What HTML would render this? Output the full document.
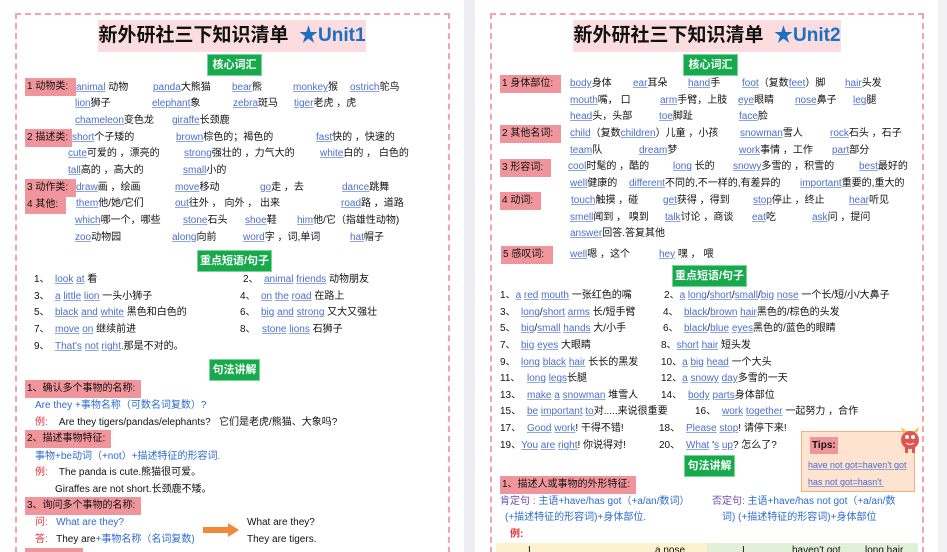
<!DOCTYPE html>
<html><head><meta charset="utf-8">
<style>
*{margin:0;padding:0;box-sizing:border-box}
html,body{width:947px;height:552px;overflow:hidden}
body{background:#fff;font-family:"Liberation Sans","Noto Sans CJK SC",sans-serif;font-size:10px;color:#111}
#w{position:relative;width:947px;height:552px;overflow:hidden}
.a{position:absolute;white-space:nowrap;line-height:12px}
u{color:#4b6fcb;text-decoration:underline;text-decoration-color:#8fa6e0}
.lb{position:absolute;background:#f0959c;line-height:18px;padding-left:2px;white-space:nowrap;color:#111}
.g{position:absolute;background:#16aa4c;color:#fff;font-weight:bold;font-size:11px;text-align:center;line-height:20px;border:1px solid #7bd49a}
.ttl{position:absolute;background:#fbdde0;font-weight:bold;font-size:19px;line-height:32px;text-align:center;white-space:nowrap}
.ttl b{color:#1e6fc0}
.bd{position:absolute;border:2px dashed #f2a3ab}
.bl{color:#2d6ccc}
.rd{color:#e0303a}
</style></head><body><div id="w">
<div style="position:absolute;left:464px;top:0;width:11px;height:552px;background:#ededf2"></div>
<div style="position:absolute;left:938px;top:0;width:9px;height:552px;background:#f2f2f5"></div>
<div class="bd" style="left:15px;top:13px;width:435px;height:560px"></div>
<div class="bd" style="left:490px;top:13px;width:434px;height:560px"></div>

<!-- LEFT PAGE -->
<div class="ttl" style="left:98px;top:20px;width:268px">新外研社三下知识清单 &nbsp;<b>★Unit1</b></div>
<div class="g" style="left:207px;top:54px;width:55px">核心词汇</div>
<div class="lb" style="left:25px;top:78px;width:51px">1 动物类:</div>
<div class="lb" style="left:25px;top:129px;width:47px">2 描述类:</div>
<div class="lb" style="left:25px;top:179px;width:51px">3 动作类:</div>
<div class="lb" style="left:25px;top:196px;width:41px">4 其他:</div>

<div class="a" style="left:76px;top:82px"><u>animal</u> 动物</div>
<div class="a" style="left:153px;top:82px"><u>panda</u>大熊猫</div>
<div class="a" style="left:232px;top:82px"><u>bear</u>熊</div>
<div class="a" style="left:293px;top:82px"><u>monkey</u>猴</div>
<div class="a" style="left:350px;top:82px"><u>ostrich</u>鸵鸟</div>
<div class="a" style="left:75px;top:98px"><u>lion</u>狮子</div>
<div class="a" style="left:152px;top:98px"><u>elephant</u>象</div>
<div class="a" style="left:233px;top:98px"><u>zebra</u>斑马</div>
<div class="a" style="left:294px;top:98px"><u>tiger</u>老虎 ，虎</div>
<div class="a" style="left:75px;top:115px"><u>chameleon</u>变色龙</div>
<div class="a" style="left:172px;top:115px"><u>giraffe</u>长颈鹿</div>
<div class="a" style="left:72px;top:132px"><u>short</u>个子矮的</div>
<div class="a" style="left:176px;top:132px"><u>brown</u>棕色的；褐色的</div>
<div class="a" style="left:316px;top:132px"><u>fast</u>快的 ，快速的</div>
<div class="a" style="left:68px;top:148px"><u>cute</u>可爱的 ，漂亮的</div>
<div class="a" style="left:184px;top:148px"><u>strong</u>强壮的 ，力气大的</div>
<div class="a" style="left:320px;top:148px"><u>white</u>白的 ， 白色的</div>
<div class="a" style="left:68px;top:165px"><u>tall</u>高的 ，高大的</div>
<div class="a" style="left:183px;top:165px"><u>small</u>小的</div>
<div class="a" style="left:76px;top:182px"><u>draw</u>画 ，绘画</div>
<div class="a" style="left:175px;top:182px"><u>move</u>移动</div>
<div class="a" style="left:260px;top:182px"><u>go</u>走 ，去</div>
<div class="a" style="left:342px;top:182px"><u>dance</u>跳舞</div>
<div class="a" style="left:76px;top:198px"><u>them</u>他/她/它们</div>
<div class="a" style="left:175px;top:198px"><u>out</u>往外 ， 向外 ， 出来</div>
<div class="a" style="left:341px;top:198px"><u>road</u>路 ，道路</div>
<div class="a" style="left:75px;top:215px"><u>which</u>哪一个，哪些</div>
<div class="a" style="left:183px;top:215px"><u>stone</u>石头</div>
<div class="a" style="left:245px;top:215px"><u>shoe</u>鞋</div>
<div class="a" style="left:297px;top:215px"><u>him</u>他/它（指雄性动物)</div>
<div class="a" style="left:75px;top:232px"><u>zoo</u>动物园</div>
<div class="a" style="left:172px;top:232px"><u>along</u>向前</div>
<div class="a" style="left:243px;top:232px"><u>word</u>字 ，词,单词</div>
<div class="a" style="left:350px;top:232px"><u>hat</u>帽子</div>

<div class="g" style="left:197px;top:250px;width:75px">重点短语/句子</div>
<div class="a" style="left:34px;top:274px">1、</div><div class="a" style="left:55px;top:274px"><u>look</u> <u>at</u> 看</div>
<div class="a" style="left:243px;top:274px">2、</div><div class="a" style="left:264px;top:274px"><u>animal</u> <u>friends</u> 动物朋友</div>
<div class="a" style="left:34px;top:291px">3、</div><div class="a" style="left:55px;top:291px"><u>a</u> <u>little</u> <u>lion</u> 一头小狮子</div>
<div class="a" style="left:240px;top:291px">4、</div><div class="a" style="left:261px;top:291px"><u>on</u> <u>the</u> <u>road</u> 在路上</div>
<div class="a" style="left:34px;top:307px">5、</div><div class="a" style="left:55px;top:307px"><u>black</u> <u>and</u> <u>white</u> 黑色和白色的</div>
<div class="a" style="left:240px;top:307px">6、</div><div class="a" style="left:261px;top:307px"><u>big</u> <u>and</u> <u>strong</u> 又大又强壮</div>
<div class="a" style="left:34px;top:324px">7、</div><div class="a" style="left:55px;top:324px"><u>move</u> <u>on</u> 继续前进</div>
<div class="a" style="left:240px;top:324px">8、</div><div class="a" style="left:262px;top:324px"><u>stone</u> <u>lions</u> 石狮子</div>
<div class="a" style="left:34px;top:341px">9、</div><div class="a" style="left:55px;top:341px"><u>That's</u> <u>not</u> <u>right</u>.那是不对的。</div>

<div class="g" style="left:209px;top:359px;width:51px">句法讲解</div>
<div class="lb" style="left:25px;top:380px;width:116px">1、确认多个事物的名称:</div>
<div class="a bl" style="left:35px;top:400px">Are they +事物名称（可数名词复数）?</div>
<div class="a" style="left:35px;top:417px"><span class="rd">例:</span>&nbsp;&nbsp;&nbsp; Are they tigers/pandas/elephants? &nbsp; 它们是老虎/熊猫、大象吗?</div>
<div class="lb" style="left:25px;top:430px;width:86px">2、描述事物特征:</div>
<div class="a bl" style="left:35px;top:451px">事物+be动词（+not）+描述特征的形容词.</div>
<div class="a" style="left:35px;top:467px"><span class="rd">例:</span>&nbsp;&nbsp;&nbsp; The panda is cute.熊猫很可爱。</div>
<div class="a" style="left:55px;top:484px">Giraffes are not short.长颈鹿不矮。</div>
<div class="lb" style="left:25px;top:497px;width:116px">3、询问多个事物的名称:</div>
<div class="a" style="left:35px;top:517px"><span class="rd">问:</span>&nbsp;&nbsp; <span class="bl">What are they?</span></div>
<div class="a" style="left:35px;top:534px"><span class="rd">答:</span>&nbsp;&nbsp; They are<span class="bl">+事物名称（名词复数)</span></div>
<svg style="position:absolute;left:203px;top:523px" width="36" height="14"><rect x="0" y="4" width="26" height="6" fill="#ee8a3a"/><polygon points="25,0 36,7 25,14" fill="#ee8a3a"/></svg>
<div class="a" style="left:247px;top:517px">What are they?</div>
<div class="a" style="left:247px;top:534px">They are tigers.</div>
<div style="position:absolute;left:25px;top:548px;width:58px;height:6px;background:#f0959c"></div>

<!-- RIGHT PAGE -->
<div class="ttl" style="left:573px;top:20px;width:268px">新外研社三下知识清单 &nbsp;<b>★Unit2</b></div>
<div class="g" style="left:683px;top:54px;width:55px">核心词汇</div>
<div class="lb" style="left:500px;top:75px;width:61px">1 身体部位:</div>
<div class="lb" style="left:500px;top:125px;width:61px">2 其他名词:</div>
<div class="lb" style="left:500px;top:159px;width:51px">3 形容词:</div>
<div class="lb" style="left:500px;top:192px;width:41px">4 动词:</div>
<div class="lb" style="left:501px;top:246px;width:52px">5 感叹词:</div>

<div class="a" style="left:570px;top:78px"><u>body</u>身体</div>
<div class="a" style="left:633px;top:78px"><u>ear</u>耳朵</div>
<div class="a" style="left:688px;top:78px"><u>hand</u>手</div>
<div class="a" style="left:742px;top:78px"><u>foot</u>（复数<u>feet</u>）脚</div>
<div class="a" style="left:845px;top:78px"><u>hair</u>头发</div>
<div class="a" style="left:570px;top:95px"><u>mouth</u>嘴， 口</div>
<div class="a" style="left:660px;top:95px"><u>arm</u>手臂，上肢</div>
<div class="a" style="left:738px;top:95px"><u>eye</u>眼睛</div>
<div class="a" style="left:795px;top:95px"><u>nose</u>鼻子</div>
<div class="a" style="left:853px;top:95px"><u>leg</u>腿</div>
<div class="a" style="left:570px;top:111px"><u>head</u>头，头部</div>
<div class="a" style="left:659px;top:111px"><u>toe</u>脚趾</div>
<div class="a" style="left:739px;top:111px"><u>face</u>脸</div>
<div class="a" style="left:570px;top:128px"><u>child</u>（复数<u>children</u>）儿童 ，小孩</div>
<div class="a" style="left:740px;top:128px"><u>snowman</u>雪人</div>
<div class="a" style="left:830px;top:128px"><u>rock</u>石头 ，石子</div>
<div class="a" style="left:570px;top:145px"><u>team</u>队</div>
<div class="a" style="left:639px;top:145px"><u>dream</u>梦</div>
<div class="a" style="left:739px;top:145px"><u>work</u>事情 ，工作</div>
<div class="a" style="left:832px;top:145px"><u>part</u>部分</div>
<div class="a" style="left:568px;top:161px"><u>cool</u>时髦的 ，酷的</div>
<div class="a" style="left:673px;top:161px"><u>long</u> 长的</div>
<div class="a" style="left:733px;top:161px"><u>snowy</u>多雪的 ，积雪的</div>
<div class="a" style="left:859px;top:161px"><u>best</u>最好的</div>
<div class="a" style="left:570px;top:178px"><u>well</u>健康的</div>
<div class="a" style="left:629px;top:178px"><u>different</u>不同的,不一样的,有差异的</div>
<div class="a" style="left:800px;top:178px"><u>important</u>重要的,重大的</div>
<div class="a" style="left:571px;top:195px"><u>touch</u>触摸 ，碰</div>
<div class="a" style="left:663px;top:195px"><u>get</u>获得 ，得到</div>
<div class="a" style="left:753px;top:195px"><u>stop</u>停止 ，终止</div>
<div class="a" style="left:849px;top:195px"><u>hear</u>听见</div>
<div class="a" style="left:570px;top:212px"><u>smell</u>闻到 ， 嗅到</div>
<div class="a" style="left:665px;top:212px"><u>talk</u>讨论 ，商谈</div>
<div class="a" style="left:752px;top:212px"><u>eat</u>吃</div>
<div class="a" style="left:812px;top:212px"><u>ask</u>问 ，提问</div>
<div class="a" style="left:570px;top:228px"><u>answer</u>回答.答复其他</div>
<div class="a" style="left:570px;top:249px"><u>well</u>嗯 ，这个</div>
<div class="a" style="left:659px;top:249px"><u>hey</u> 嘿 ， 喂</div>

<div class="g" style="left:672px;top:265px;width:75px">重点短语/句子</div>
<div class="a" style="left:500px;top:290px">1、<u>a</u> <u>red</u> <u>mouth</u> 一张红色的嘴</div>
<div class="a" style="left:664px;top:290px">2、<u>a</u> <u>long</u>/<u>short</u>/<u>small</u>/<u>big</u> <u>nose</u> 一个长/短/小/大鼻子</div>
<div class="a" style="left:500px;top:307px">3、</div><div class="a" style="left:521px;top:307px"><u>long</u>/<u>short</u> <u>arms</u> 长/短手臂</div>
<div class="a" style="left:663px;top:307px">4、</div><div class="a" style="left:684px;top:307px"><u>black</u>/<u>brown</u> <u>hair</u>黑色的/棕色的头发</div>
<div class="a" style="left:500px;top:323px">5、</div><div class="a" style="left:521px;top:323px"><u>big</u>/<u>small</u> <u>hands</u> 大/小手</div>
<div class="a" style="left:663px;top:323px">6、</div><div class="a" style="left:684px;top:323px"><u>black</u>/<u>blue</u> <u>eyes</u>黑色的/蓝色的眼睛</div>
<div class="a" style="left:500px;top:340px">7、</div><div class="a" style="left:521px;top:340px"><u>big</u> <u>eyes</u> 大眼睛</div>
<div class="a" style="left:661px;top:340px">8、<u>short</u> <u>hair</u> 短头发</div>
<div class="a" style="left:500px;top:357px">9、</div><div class="a" style="left:521px;top:357px"><u>long</u> <u>black</u> <u>hair</u> 长长的黑发</div>
<div class="a" style="left:661px;top:357px">10、<u>a</u> <u>big</u> <u>head</u> 一个大头</div>
<div class="a" style="left:500px;top:373px">11、</div><div class="a" style="left:527px;top:373px"><u>long</u> <u>legs</u>长腿</div>
<div class="a" style="left:661px;top:373px">12、<u>a</u> <u>snowy</u> <u>day</u>多雪的一天</div>
<div class="a" style="left:500px;top:390px">13、</div><div class="a" style="left:527px;top:390px"><u>make</u> <u>a</u> <u>snowman</u> 堆雪人</div>
<div class="a" style="left:661px;top:390px">14、</div><div class="a" style="left:688px;top:390px"><u>body</u> <u>parts</u>身体部位</div>
<div class="a" style="left:500px;top:406px">15、</div><div class="a" style="left:527px;top:406px"><u>be</u> <u>important</u> <u>to</u>对.....来说很重要</div>
<div class="a" style="left:695px;top:406px">16、</div><div class="a" style="left:722px;top:406px"><u>work</u> <u>together</u> 一起努力 ，合作</div>
<div class="a" style="left:500px;top:423px">17、</div><div class="a" style="left:527px;top:423px"><u>Good</u> <u>work</u>! 干得不错!</div>
<div class="a" style="left:659px;top:423px">18、</div><div class="a" style="left:686px;top:423px"><u>Please</u> <u>stop</u>! 请停下来!</div>
<div class="a" style="left:500px;top:440px">19、<u>You</u> <u>are</u> <u>right</u>! 你说得对!</div>
<div class="a" style="left:659px;top:440px">20、</div><div class="a" style="left:686px;top:440px"><u>What</u> '<u>s</u> <u>up</u>? 怎么了?</div>

<div style="position:absolute;left:801px;top:431px;width:114px;height:61px;background:#fde3d0;border:1px solid #f5b07f"></div>
<div class="a" style="left:810px;top:437px;background:#f0959c;line-height:17px;font-weight:bold;padding:0 2px">Tips:</div>
<div class="a" style="left:808px;top:459px;font-size:9px"><u>have not got=haven't got</u></div>
<div class="a" style="left:808px;top:476px;font-size:9px"><u>has not got=hasn't&nbsp;</u></div>
<svg style="position:absolute;left:898px;top:426px" width="24" height="28" viewBox="0 0 24 28"><ellipse cx="12" cy="14" rx="9" ry="9" fill="#e25450"/><polygon points="5,7 3,1 8,5" fill="#f0c030"/><polygon points="19,7 21,1 16,5" fill="#f0c030"/><circle cx="9" cy="11" r="2" fill="#fff"/><circle cx="15" cy="11" r="2" fill="#fff"/><path d="M8 17 Q12 20 16 17" stroke="#fff" fill="none"/><rect x="7" y="21" width="3" height="6" fill="#e25450"/><rect x="14" y="21" width="3" height="6" fill="#e25450"/></svg>

<div class="g" style="left:684px;top:455px;width:51px">句法讲解</div>
<div class="lb" style="left:500px;top:476px;width:136px">1、描述人或事物的外形特征:</div>
<div class="a bl" style="left:500px;top:496px"><span style="color:#6a4fb0">肯定句 :</span> 主语+have/has got（+a/an/数词）</div>
<div class="a bl" style="left:712px;top:496px"><span style="color:#6a4fb0">否定句:</span> 主语+have/has not got（+a/an/数</div>
<div class="a bl" style="left:505px;top:512px">(+描述特征的形容词)+身体部位.</div>
<div class="a bl" style="left:722px;top:512px">词) (+描述特征的形容词)+身体部位</div>
<div class="a rd" style="left:510px;top:529px;font-weight:bold">例:</div>
<div style="position:absolute;left:496px;top:543px;width:211px;height:9px;background:#fdf2cf"></div>
<div style="position:absolute;left:707px;top:543px;width:211px;height:9px;background:#e2f0d9"></div>
<div class="a" style="left:528px;top:545px">I</div>
<div class="a" style="left:655px;top:545px">a nose</div>
<div class="a" style="left:742px;top:545px">I</div>
<div class="a" style="left:792px;top:545px">haven't got</div>
<div class="a" style="left:865px;top:545px">long hair</div>
</div></body></html>
